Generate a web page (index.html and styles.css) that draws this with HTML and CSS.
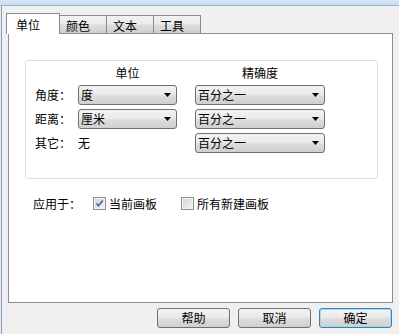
FILE: index.html
```html
<!DOCTYPE html>
<html lang="zh">
<head>
<meta charset="utf-8">
<link rel="stylesheet" href="styles.css">
</head>
<body>
<div class="window">
  <div class="titlebar"></div>
  <div class="body">
    <div class="edge"></div>
    <div class="main">
      <div class="tabs">
        <div class="tab active">单位</div>
        <div class="tab">颜色</div>
        <div class="tab">文本</div>
        <div class="tab">工具</div>
      </div>
      <div class="panel">
        <div class="group">
          <div class="grid">
            <div></div>
            <div class="head">单位</div>
            <div class="head">精确度</div>

            <div class="label">角度：</div>
            <div class="select"><span>度</span><svg class="arrow" width="7" height="4" viewBox="0 0 7 4"><polygon points="0,0 7,0 3.5,4" fill="#000"/></svg></div>
            <div class="select"><span>百分之一</span><svg class="arrow" width="7" height="4" viewBox="0 0 7 4"><polygon points="0,0 7,0 3.5,4" fill="#000"/></svg></div>

            <div class="label">距离：</div>
            <div class="select"><span>厘米</span><svg class="arrow" width="7" height="4" viewBox="0 0 7 4"><polygon points="0,0 7,0 3.5,4" fill="#000"/></svg></div>
            <div class="select"><span>百分之一</span><svg class="arrow" width="7" height="4" viewBox="0 0 7 4"><polygon points="0,0 7,0 3.5,4" fill="#000"/></svg></div>

            <div class="label">其它：</div>
            <div class="value">无</div>
            <div class="select"><span>百分之一</span><svg class="arrow" width="7" height="4" viewBox="0 0 7 4"><polygon points="0,0 7,0 3.5,4" fill="#000"/></svg></div>
          </div>
        </div>
        <div class="apply">
          <span class="apply-label">应用于：</span>
          <label class="check">
            <span class="box checked"><svg width="9" height="9" viewBox="0 0 9 9"><path d="M1.5 4.5 L3.5 6.8 L7.8 1.5" fill="none" stroke="#4a5e9c" stroke-width="1.6"/></svg></span>
            <span>当前画板</span>
          </label>
          <label class="check">
            <span class="box"></span>
            <span>所有新建画板</span>
          </label>
        </div>
      </div>
      <div class="buttons">
        <div class="btn">帮助</div>
        <div class="btn">取消</div>
        <div class="btn default">确定</div>
      </div>
    </div>
  </div>
</div>
</body>
</html>
```
FILE: styles.css
```css
* { box-sizing: border-box; }
html, body { margin: 0; padding: 0; }
body {
  background: #f0f0f0;
  font-family: "Noto Sans CJK SC", "Liberation Sans", sans-serif;
  font-size: 12px;
  color: #000;
}
.window {
  width: 399px;
  height: 334px;
  overflow: hidden;
  background: #f0f0f0;
}
.titlebar {
  height: 6px;
  background: linear-gradient(#d9e8f8, #c8dcf2);
  border-bottom: 1px solid #a4b5c9;
}
.body {
  display: flex;
  height: 328px;
}
.edge {
  width: 2px;
  background: linear-gradient(to right, #e3eaf2 50%, #8c9eb5 50%);
}
.main {
  flex: 1;
  padding-top: 7px;
}
.tabs {
  display: flex;
  align-items: flex-end;
  height: 21px;
  margin-bottom: -1px;
  padding-left: 4px;
  position: relative;
  z-index: 1;
}
.tab {
  height: 18px;
  width: 48px;
  margin-bottom: 1px;
  margin-left: -1px;
  border: 1px solid #898c95;
  border-bottom: none;
  background: linear-gradient(#f2f2f2, #ebebeb 45%, #dddddd 55%, #cfcfcf);
  padding-left: 6px;
  line-height: 19px;
}
.tab.active {
  height: 21px;
  width: 54px;
  margin-bottom: 0;
  margin-left: 0;
  background: #fff;
  padding-left: 9px;
  line-height: 21px;
  position: relative;
  z-index: 2;
}
.panel {
  margin-left: 6px;
  width: 385px;
  height: 270px;
  border: 1px solid #898c95;
  background: #fff;
  padding-top: 26px;
}
.group {
  margin-left: 16px;
  width: 353px;
  height: 119px;
  border: 1px solid #d5dfe5;
  border-radius: 3px;
  padding: 4px 0 0 9px;
}
.grid {
  display: grid;
  grid-template-columns: 43px 99px 148px;
  grid-template-rows: 16px 20px 20px 20px;
  row-gap: 4px;
}
.grid > :nth-child(3n) { margin-left: 18px; }
.head, .label, .value {
  line-height: 16px;
  align-self: center;
  white-space: nowrap;
}
.head { text-align: center; }
.select {
  display: flex;
  align-items: center;
  height: 20px;
  border: 1px solid #707070;
  border-radius: 3px;
  background: linear-gradient(#f2f2f2, #ebebeb 45%, #dddddd 55%, #cfcfcf);
  padding: 0 5px 0 2px;
  line-height: 16px;
  white-space: nowrap;
}
.select span { flex: 1; }
.arrow { display: block; }
.apply {
  display: flex;
  align-items: center;
  height: 15px;
  margin-top: 17px;
  margin-left: 24px;
}
.apply-label { width: 60px; }
.check {
  display: flex;
  align-items: center;
  margin-right: 24px;
}
.box {
  width: 13px;
  height: 13px;
  border: 1px solid #8e8f8f;
  background: linear-gradient(135deg, #cfd3d9, #f4f4f4);
  box-shadow: inset 0 0 0 1px #f4f4f4;
  margin-right: 3px;
  display: flex;
  align-items: center;
  justify-content: center;
}
.box.checked svg { display: block; }
.buttons {
  display: flex;
  justify-content: flex-end;
  gap: 8px;
  margin-top: 5px;
  padding-right: 7px;
}
.btn {
  width: 73px;
  height: 20px;
  border: 1px solid #707070;
  border-radius: 3px;
  background: linear-gradient(#f2f2f2, #ebebeb 45%, #dddddd 55%, #cfcfcf);
  text-align: center;
  line-height: 18px;
}
.btn.default {
  border-color: #3c7fb1;
  box-shadow: inset 0 0 0 1px #9fdcf3;
}
```
